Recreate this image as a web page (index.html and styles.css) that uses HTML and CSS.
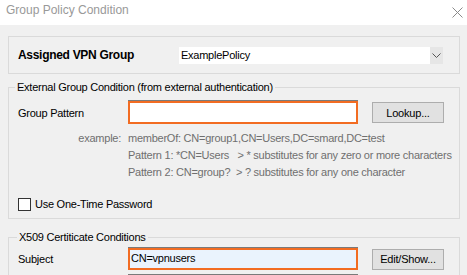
FILE: index.html
```html
<!doctype html>
<html lang="en">
  <head>
    <meta charset="UTF-8" />
    <title>Group Policy Condition</title>
    <link rel="stylesheet" href="styles.css">
  </head>
  <body>
    <div class="window">
      <div class="titlebar">
        <span class="title">Group Policy Condition</span>
        <svg class="close" width="11" height="11" viewBox="0 0 11 11">
          <path d="M0.5 0.5 L10.5 10.5 M10.5 0.5 L0.5 10.5" stroke="#8a8a8a" stroke-width="1" fill="none" />
        </svg>
      </div>

      <div class="content">
        <div class="box assigned">
          <span class="assigned-label">Assigned VPN Group</span>
          <div class="select">
            <span class="select-value">ExamplePolicy</span>
            <span class="select-arrow">
              <svg width="9" height="5" viewBox="0 0 9 5">
                <path d="M0.5 0.5 L4.5 4.5 L8.5 0.5" stroke="#555" stroke-width="1" fill="none" />
              </svg>
            </span>
          </div>
        </div>

        <fieldset class="group external">
          <legend>External Group Condition (from external authentication)</legend>
          <div class="row">
            <span class="label">Group Pattern</span>
            <div class="input focused"></div>
            <button class="btn">Lookup...</button>
          </div>
          <div class="example">
            <span class="example-key">example:</span>
            <div class="example-lines">
              <div>memberOf: CN=group1,CN=Users,DC=smard,DC=test</div>
              <div>Pattern 1: *CN=Users&nbsp;&nbsp; &gt; * substitutes for any zero or more characters</div>
              <div>Pattern 2: CN=group?&nbsp; &gt; ? substitutes for any one character</div>
            </div>
          </div>
          <label class="check">
            <span class="checkbox"></span>
            Use One-Time Password
          </label>
        </fieldset>

        <fieldset class="group x509">
          <legend>X509 Certiticate Conditions</legend>
          <div class="row">
            <span class="label">Subject</span>
            <div class="input focused filled">CN=vpnusers</div>
            <button class="btn">Edit/Show...</button>
          </div>
          <div class="row next">
            <span class="label"></span>
            <div class="input"></div>
          </div>
        </fieldset>
      </div>
    </div>
  </body>
</html>
```

FILE: styles.css
```css
* {
  margin: 0;
  padding: 0;
  box-sizing: border-box;
}

body {
  font-family: "Liberation Sans", Arial, sans-serif;
  font-size: 11px;
  letter-spacing: -0.25px;
  color: #000;
  background: #f0f0f0;
  width: 467px;
  height: 275px;
  overflow: hidden;
}

.titlebar {
  height: 25px;
  background: #ffffff;
  display: flex;
  justify-content: space-between;
  align-items: flex-start;
  padding: 3px 4px 0 6px;
  color: #999999;
  font-size: 12px;
  letter-spacing: 0;
}

.close {
  margin-top: 4px;
}

.content {
  padding: 11px 7px 0 8px;
}

.box {
  border: 1px solid #dadada;
}

.assigned {
  height: 38px;
  display: flex;
  align-items: center;
  padding-left: 9px;
}

.assigned-label {
  font-weight: bold;
  font-size: 12px;
  letter-spacing: -0.3px;
  width: 161px;
}

.select {
  width: 264px;
  height: 17px;
  background: #ffffff;
  display: flex;
  align-items: center;
  justify-content: space-between;
}

.select-value {
  padding-left: 2px;
}

.select-arrow {
  width: 13px;
  height: 17px;
  background: #e6e6e6;
  display: flex;
  align-items: center;
  justify-content: center;
}

.group {
  border: 1px solid #dadada;
  margin-top: 5px;
  padding: 0 0 0 9px;
  height: 140px;
}

.group legend {
  margin-left: -3px;
  padding: 0 2px;
  line-height: 16px;
}

.x509 legend {
  margin-left: -1px;
}

.row {
  display: grid;
  grid-template-columns: 96px 230px 72px;
  column-gap: 14px;
  align-items: center;
}

.external .row {
  margin-top: 6px;
}

.input {
  height: 23px;
  background: #ffffff;
  border: 1px solid #7a7a7a;
}

.input.focused {
  border: 2px solid #f26c22;
  box-shadow: 0 -1px 0 #7a7a7a;
}

.input.filled {
  background: #eaf3fd;
  padding: 0 0 0 1px;
  line-height: 16px;
}

.btn {
  font-family: inherit;
  font-size: 11px;
  letter-spacing: -0.2px;
  height: 21px;
  background: #e1e1e1;
  border: 1px solid #adadad;
  color: #000;
}

.example {
  display: flex;
  margin-top: 6px;
  color: #6f6f6f;
  line-height: 17px;
  white-space: nowrap;
}

.example-key {
  width: 110px;
  text-align: right;
  padding-right: 7px;
}

.check {
  display: flex;
  align-items: center;
  gap: 4px;
  margin: 15px 0 5px 0;
  height: 16px;
}

.checkbox {
  width: 13px;
  height: 13px;
  background: #ffffff;
  border: 1px solid #333333;
}

.x509 {
  margin-top: 10px;
  height: auto;
}

.x509 .row {
  margin-top: 3px;
}

.x509 .row.next {
  margin-top: 4px;
}

.x509 .input.filled {
  height: 22px;
}
```
